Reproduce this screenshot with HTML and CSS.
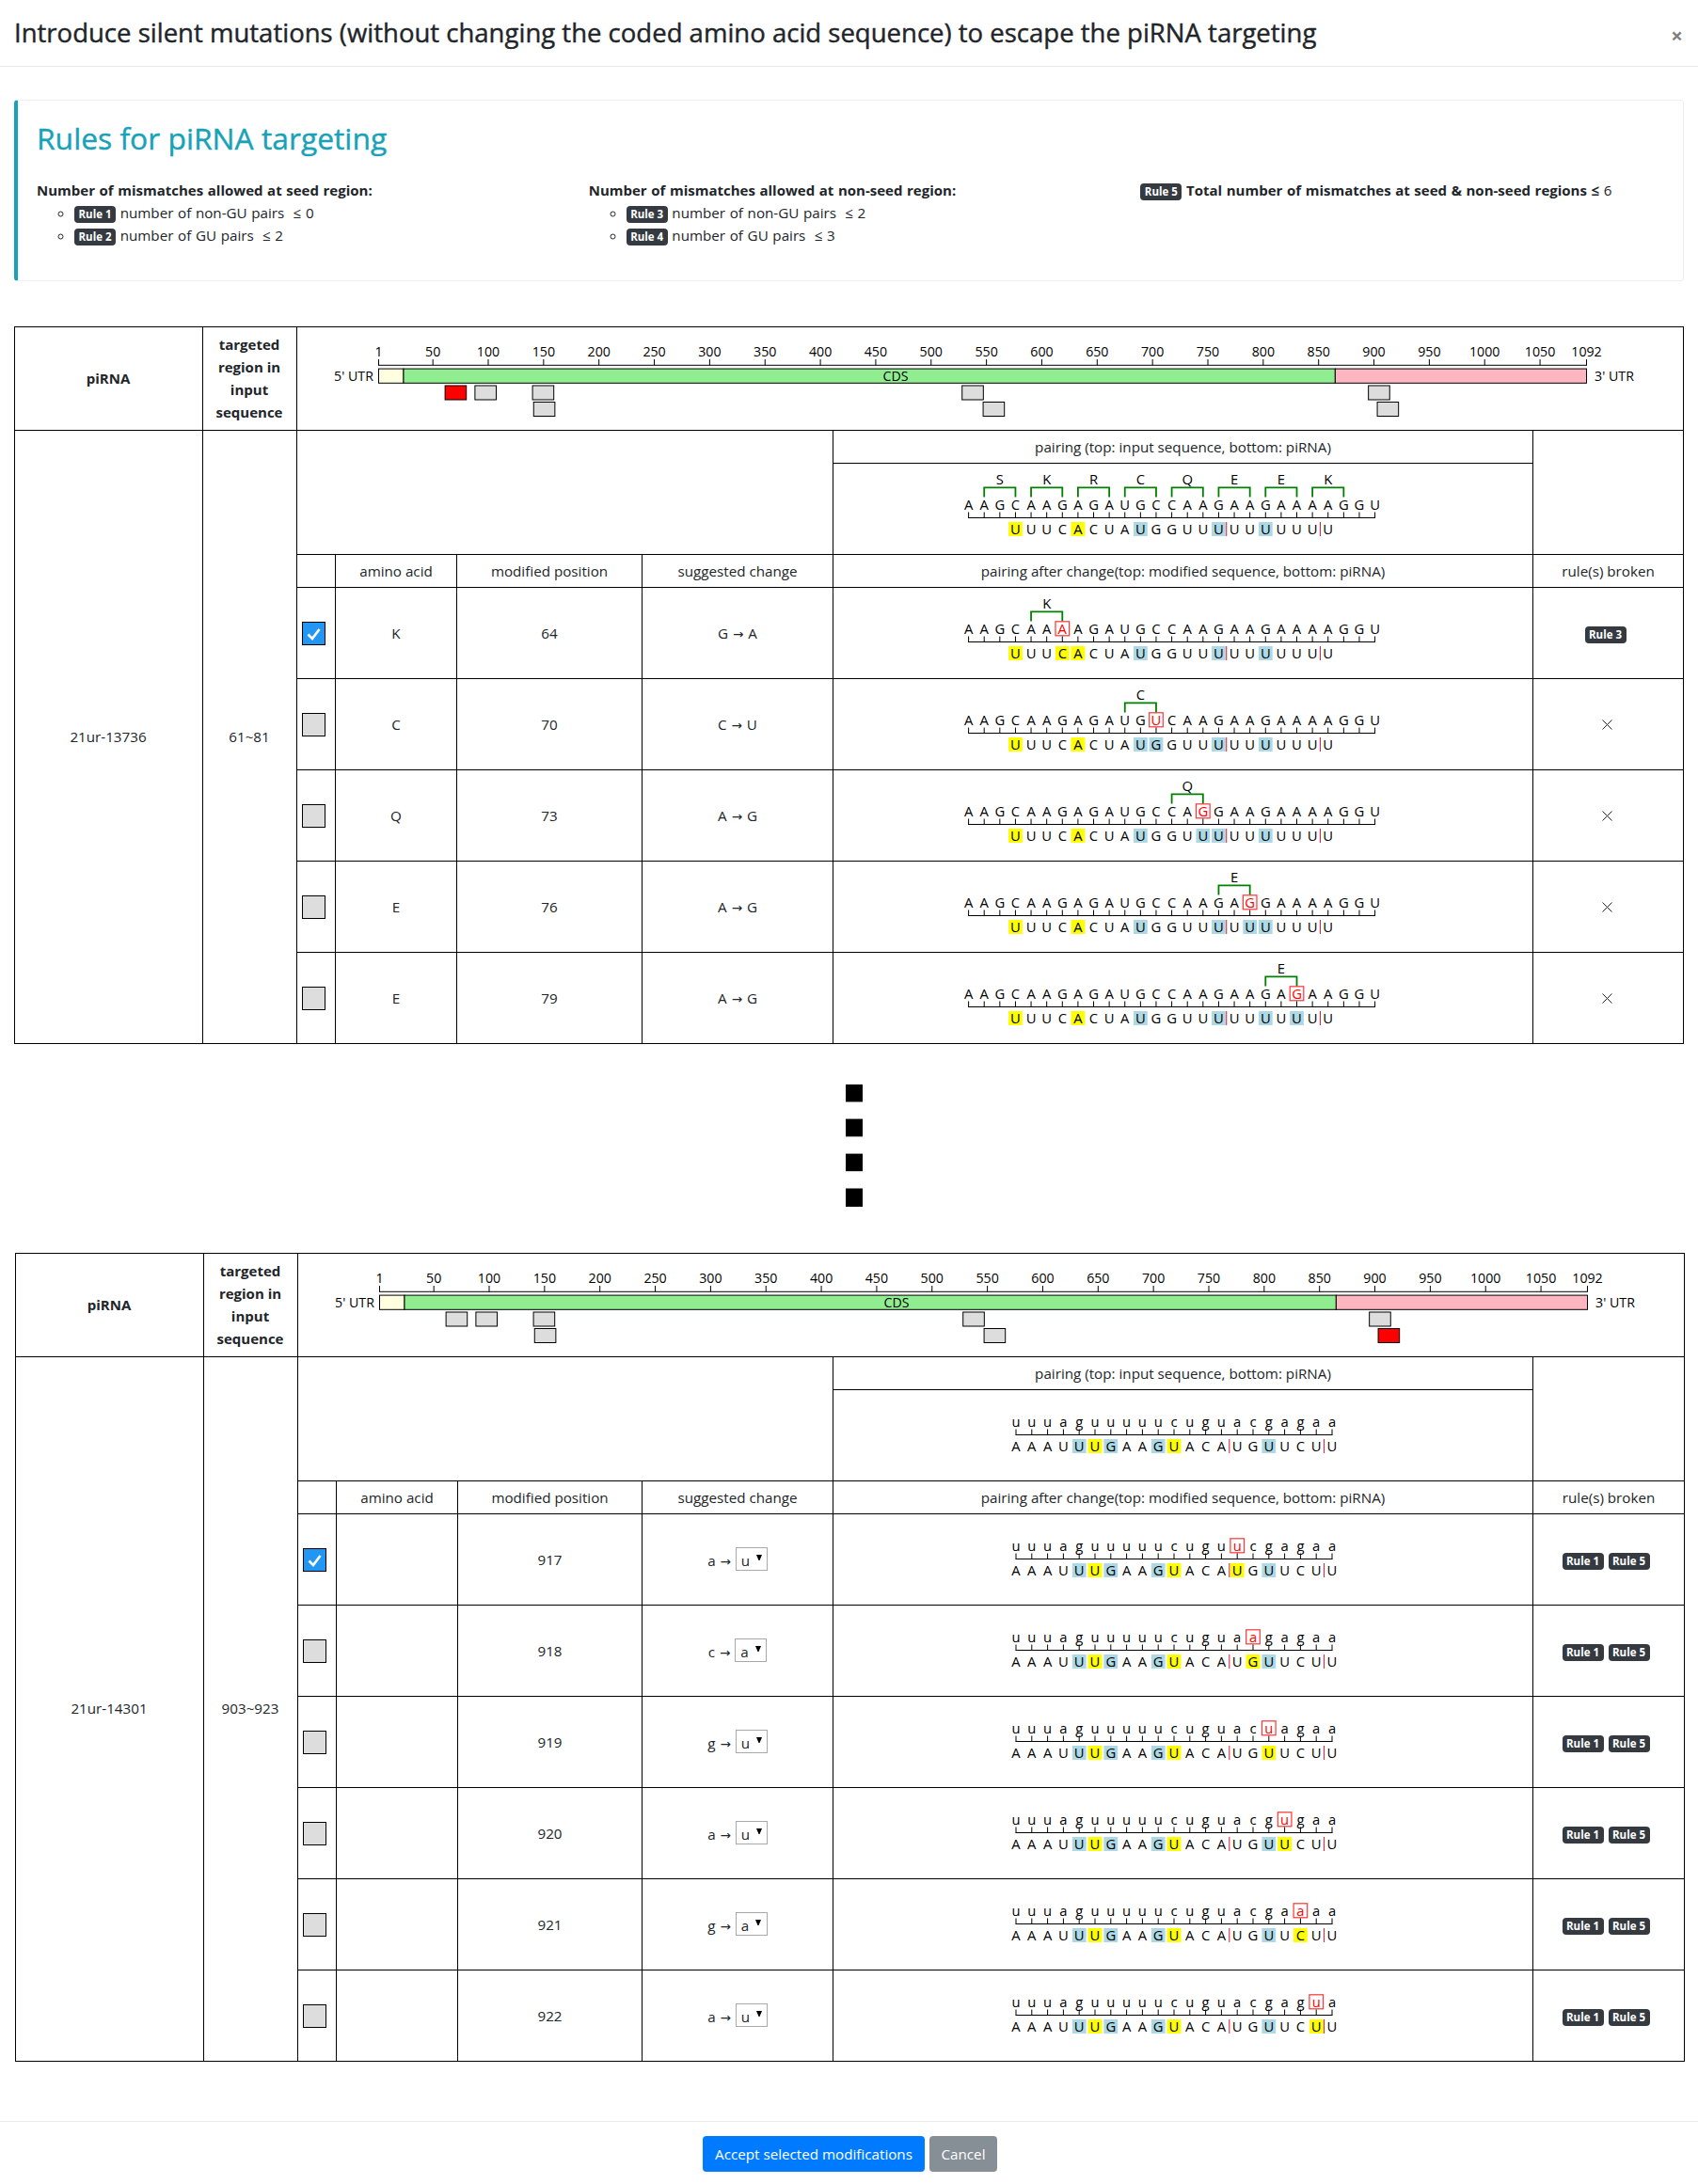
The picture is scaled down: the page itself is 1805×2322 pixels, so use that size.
FILE: index.html
```
<!DOCTYPE html>
<html lang="en">
<head>
<meta charset="utf-8">
<title>Introduce silent mutations</title>
<link rel="stylesheet" href="styles.css">
</head>
<body>
<header class="modal-header">
  <h3 class="modal-title">Introduce silent mutations (without changing the coded amino acid sequence) to escape the piRNA targeting</h3>
  <button class="close" type="button">×</button>
</header>
<main class="modal-body">
  <section class="callout">
    <h2 class="callout-title">Rules for piRNA targeting</h2>
    <div class="rules">
      <div class="rule-col">
        <strong>Number of mismatches allowed at seed region:</strong>
        <ul>
          <li><span class="badge">Rule 1</span> number of non-GU pairs &nbsp;≤ 0</li>
          <li><span class="badge">Rule 2</span> number of GU pairs &nbsp;≤ 2</li>
        </ul>
      </div>
      <div class="rule-col">
        <strong>Number of mismatches allowed at non-seed region:</strong>
        <ul>
          <li><span class="badge">Rule 3</span> number of non-GU pairs &nbsp;≤ 2</li>
          <li><span class="badge">Rule 4</span> number of GU pairs &nbsp;≤ 3</li>
        </ul>
      </div>
      <div class="rule-col">
        <span class="badge">Rule 5</span> <strong>Total number of mismatches at seed &amp; non-seed regions ≤</strong> 6
      </div>
    </div>
  </section>

  <table class="sites" id="site-a"></table>
  <svg class="dots" width="18" height="130" viewBox="0 0 18 130">
    <rect y="0" width="18" height="18.5"/><rect y="36.6" width="18" height="18.8"/>
    <rect y="73.6" width="18" height="18.6"/><rect y="110.5" width="18" height="19.5"/>
  </svg>
  <table class="sites sites-b" id="site-b"></table>
</main>
<footer class="modal-footer">
  <button class="btn btn-primary" type="button">Accept selected modifications</button>
  <button class="btn btn-secondary" type="button">Cancel</button>
</footer>
<script src="app.js"></script>
</body>
</html>
```
FILE: styles.css
```
* { box-sizing: border-box; }
body {
  margin: 0;
  font-family: "Open Sans", "Noto Sans", sans-serif;
  font-size: 15.2px;
  line-height: 24px;
  color: #212529;
  background: #fff;
}
.modal-header {
  display: flex;
  justify-content: space-between;
  align-items: center;
  height: 71px;
  padding: 0 15px;
  border-bottom: 1px solid #e9ecef;
}
.modal-title {
  margin: 0;
  font-size: 27.53px;
  font-weight: 500;
  line-height: 42px;
  white-space: nowrap;
  -webkit-text-stroke: .4px;
}
.close {
  border: 0; padding: 3px 0 0; background: none;
  width: 15px;
  font: 700 22px/24px "Open Sans", sans-serif;
  color: #7f7f7f;
}
.modal-body { padding: 35px 15px 63px; }
.callout {
  height: 193px;
  padding: 17px 20px 0;
  border: 1px solid #eee;
  border-left: 4px solid #17a2b8;
  border-radius: 4px;
}
.callout-title {
  margin: 0 0 20px;
  font-size: 31.8px;
  font-weight: 500;
  line-height: 46px;
  color: #17a2b8;
  -webkit-text-stroke: .4px;
}
.rules { display: grid; grid-template-columns: repeat(3, 586.7px); }
.rule-col { white-space: nowrap; word-spacing: .7px; }
.rule-col strong { font-size: 15px; }
.rule-col ul { margin: 0; padding-left: 40px; list-style: circle; }
.badge {
  display: inline-block;
  width: 44px;
  height: 18px;
  border-radius: 4px;
  background: #343a40;
  color: #fff;
  font-size: 11.5px;
  font-weight: 700;
  line-height: 18px;
  text-align: center;
  word-spacing: 0;
}
.sites {
  width: 1775px;
  margin-top: 48px;
  table-layout: fixed;
  border-collapse: separate;
  border-spacing: 0;
  border: solid #000;
  border-width: 1px 0 0 1px;
  text-align: center;
}
.sites-b { margin: 49px 0 0 1px; }
.sites th, .sites td {
  padding: 0;
  border: solid #000;
  border-width: 0 1px 1px 0;
  vertical-align: middle;
}
.sites th { padding: 0 1px 2px 0; font-size: 15px; }
.sites .cell-name { padding: 0 1px 2px 0; }
.sites .cell-rules { padding-right: 6px; word-spacing: 1px; }
.row-ruler { height: 110px; }
.row-label { height: 35px; }
.row-pair { height: 97px; }
.sites svg { display: block; }
.ruler text, .pairing text { font-size: 14.2px; text-anchor: middle; fill: #000; }
.pairing text { font-size: 14.8px; }
.checkbox {
  display: block;
  width: 25px;
  height: 25px;
  margin-left: 5px;
  border: 1px solid #000;
  background: #ddd;
}
.checkbox.checked { background: #2196f3; }
.arrow { margin: 0 1px; font-family: "DejaVu Sans", sans-serif; font-size: 13.5px; line-height: 1; }
.select {
  display: inline-flex;
  align-items: center;
  gap: 7px;
  width: 34px;
  height: 25px;
  padding: 2px 0 0 5px;
  border: 1px solid #a9a9a9;
}
.sites .select svg { margin-bottom: 6px; }
.sites .cross { margin: 0 auto; transform: translateX(2px); }
.dots { display: block; margin: 43px 0 0 884px; }
.modal-footer {
  display: flex;
  justify-content: center;
  gap: 5px;
  padding: 15px 0 12px 2px;
  border-top: 1px solid #e9ecef;
}
.btn {
  height: 38px;
  padding: 0;
  border: 0;
  border-radius: 4px;
  font: 15.2px/38px "Open Sans", sans-serif;
  color: #fff;
}
.btn-primary { width: 236px; background: #007bff; }
.btn-secondary { width: 72px; background: #868e96; }
```
FILE: app.js
```
const BLUE = 'lightblue', YELLOW = 'yellow';

// Scale, transcript bar and targeted regions; `active` is the start of the highlighted region.
function ruler(active) {
  const x0 = 86.5, unit = 1.1769, at = n => x0 + (n - 1) * unit;
  let s = '<svg class="ruler" width="1470" height="109">';
  const ticks = [1];
  for (let n = 50; n <= 1050; n += 50) ticks.push(n);
  ticks.push(1092);
  for (const n of ticks) {
    s += `<text x="${at(n)}" y="31">${n}</text><path d="M${at(n)} 34V40.3" stroke="#000"/>`;
  }
  s += `<path d="M${at(1) - .5} 40.3H${at(1092) + .5}" stroke="#000"/>`;
  const parts = [[1, 23.5, 'lightyellow'], [23.5, 865, 'lightgreen'], [865, 1092, 'lightpink']];
  for (const [a, b, c] of parts) {
    s += `<rect x="${at(a)}" y="44.1" width="${(b - a) * unit}" height="15.2" fill="${c}" stroke="#000"/>`;
  }
  s += '<text x="60" y="56.5">5\' UTR</text><text x="636" y="56.5">CDS</text><text x="1400" y="56.5">3\' UTR</text>';
  const sites = [[61, 0], [88, 0], [140, 0], [141, 1], [528, 0], [547, 1], [895, 0], [903, 1]];
  for (const [n, row] of sites) {
    s += `<rect x="${at(n)}" y="${row ? 79.5 : 62}" width="22.6" height="15" fill="${n === active ? 'red' : '#ddd'}" stroke="#000"/>`;
  }
  return s + '</svg>';
}

function pairing(site, marks, codons, changed, base) {
  const { x0, pitch, dy, offset } = site;
  const at = i => x0 + i * pitch;
  let s = `<svg class="pairing" width="743" height="96"><g transform="translate(0 ${dy})">`;
  for (const [i, label] of codons) {
    s += `<text x="${at(i + 1)}" y="22">${label}</text>`;
    s += `<path d="M${at(i)} 35.5V25.3H${at(i + 2)}V35.5" fill="none" stroke="green" stroke-width="1.8"/>`;
  }
  [...site.top].forEach((c, i) => {
    const hit = i === changed;
    s += `<text x="${at(i)}" y="49.3"${hit ? ' style="fill:red"' : ''}>${hit ? base : c}</text>`;
    if (hit) s += `<rect x="${at(i) - 7.3}" y="35.8" width="14.6" height="15" fill="none" stroke="#f33" stroke-width="1.2"/>`;
    s += `<path d="M${at(i)} 51.5V57.3" stroke="#000"/>`;
  });
  s += `<path d="M${at(0) - .5} 57.5H${at(site.top.length - 1) + .5}" stroke="#000"/>`;
  [...site.bottom].forEach((c, i) => {
    const x = at(i + offset);
    if (marks[i]) s += `<rect x="${x - 7.4}" y="62" width="14.8" height="15" fill="${marks[i]}"/>`;
    s += `<text x="${x}" y="75">${c}</text>`;
  });
  for (const i of [13.5, 19.5]) s += `<path d="M${at(i + offset)} 62V77" stroke="crimson"/>`;
  return s + '</g></svg>';
}

const check = on => `<span class="checkbox${on ? ' checked' : ''}">${on
  ? '<svg width="23" height="23"><path d="M5.5 12.5L10 17L17.5 7" fill="none" stroke="#fff" stroke-width="2.7"/></svg>' : ''}</span>`;
const badge = n => `<span class="badge">Rule ${n}</span>`;
const cross = '<svg class="cross" width="11" height="11"><path d="M.5 .5L10.5 10.5M10.5 .5L.5 10.5" stroke="#212529"/></svg>';
const select = c => `<span class="select">${c}<svg width="6" height="6"><path d="M0 0H6L3.5 6H2.5Z"/></svg></span>`;

function table(id, site) {
  const span = site.rows.length + 3;
  let s = '<colgroup>' + site.cols.map(w => `<col style="width:${w}px">`).join('') + '</colgroup>';
  s += `<tr class="row-ruler"><th>piRNA</th><th>targeted<br>region in<br>input<br>sequence</th><td colspan="6">${ruler(site.active)}</td></tr>`;
  s += `<tr class="row-label"><td class="cell-name" rowspan="${span}">${site.name}</td><td class="cell-name" rowspan="${span}">${site.range}</td>
    <td colspan="4" rowspan="2"></td><td>pairing (top: input sequence, bottom: piRNA)</td><td rowspan="2"></td></tr>`;
  s += `<tr class="row-pair"><td>${pairing(site, site.marks, site.codons)}</td></tr>`;
  s += `<tr class="row-label"><td></td><td>amino acid</td><td>modified position</td><td>suggested change</td>
    <td>pairing after change(top: modified sequence, bottom: piRNA)</td><td>rule(s) broken</td></tr>`;
  site.rows.forEach((r, i) => {
    const marks = { ...site.marks, [r.at - site.offset]: r.mark };
    const codons = r.acid ? [[r.at - 2, r.acid]] : [];
    const rules = r.rules.length ? r.rules.map(badge).join(' ') : cross;
    s += `<tr class="row-pair"><td>${check(i === 0)}</td><td>${r.acid || ''}</td><td>${r.pos}</td>
      <td>${r.from} <span class="arrow">→</span> ${r.acid ? r.to : select(r.to)}</td>
      <td>${pairing(site, marks, codons, r.at, r.to)}</td><td class="cell-rules">${rules}</td></tr>`;
  });
  document.getElementById(id).innerHTML = s;
}

table('site-a', {
  name: '21ur-13736', range: '61~81', active: 61,
  cols: [200, 100, 41, 129, 197, 203, 744, 160],
  x0: 143.6, pitch: 16.615, dy: 0, offset: 3,
  top: 'AAGCAAGAGAUGCCAAGAAGAAAAGGU', bottom: 'UUUCACUAUGGUUUUUUUUUU',
  marks: { 0: YELLOW, 4: YELLOW, 8: BLUE, 13: BLUE, 16: BLUE },
  codons: [[1, 'S'], [4, 'K'], [7, 'R'], [10, 'C'], [13, 'Q'], [16, 'E'], [19, 'E'], [22, 'K']],
  rows: [
    { acid: 'K', pos: 64, from: 'G', to: 'A', at: 6, mark: YELLOW, rules: [3] },
    { acid: 'C', pos: 70, from: 'C', to: 'U', at: 12, mark: BLUE, rules: [] },
    { acid: 'Q', pos: 73, from: 'A', to: 'G', at: 15, mark: BLUE, rules: [] },
    { acid: 'E', pos: 76, from: 'A', to: 'G', at: 18, mark: BLUE, rules: [] },
    { acid: 'E', pos: 79, from: 'A', to: 'G', at: 21, mark: BLUE, rules: [] },
  ],
});

table('site-b', {
  name: '21ur-14301', range: '903~923', active: 903,
  cols: [200, 100, 41, 129, 196, 203, 744, 161],
  x0: 194, pitch: 16.8, dy: -10, offset: 0,
  top: 'uuuaguuuuucuguacgagaa', bottom: 'AAAUUUGAAGUACAUGUUCUU',
  marks: { 4: BLUE, 5: YELLOW, 6: BLUE, 9: BLUE, 10: YELLOW, 16: BLUE },
  codons: [],
  rows: [
    { pos: 917, from: 'a', to: 'u', at: 14 }, { pos: 918, from: 'c', to: 'a', at: 15 },
    { pos: 919, from: 'g', to: 'u', at: 16 }, { pos: 920, from: 'a', to: 'u', at: 17 },
    { pos: 921, from: 'g', to: 'a', at: 18 }, { pos: 922, from: 'a', to: 'u', at: 19 },
  ].map(r => ({ ...r, mark: YELLOW, rules: [1, 5] })),
});
```
